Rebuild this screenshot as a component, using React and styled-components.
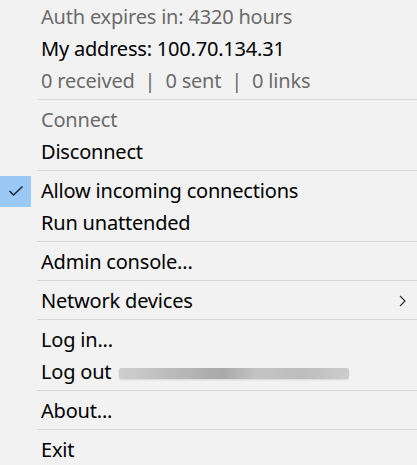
import React from 'react';
import styled, { createGlobalStyle } from 'styled-components';

const GlobalStyle = createGlobalStyle`
  html, body {
    margin: 0;
    background: #f2f2f2;
  }
  body {
    font-family: 'Noto Sans', 'Open Sans', sans-serif;
  }
`;

const Menu = styled.div`
  display: flex;
  flex-flow: column;
  padding-top: 1px;
  width: 417px;
  height: 465px;
  overflow: hidden;
  background: #f2f2f2;
`;

const Item = styled.div`
  display: flex;
  align-items: center;
  height: 32px;
  font-size: 20px;
  line-height: 32px;
  letter-spacing: -0.2px;
  color: ${({ $muted }) => ($muted ? '#6b6b6b' : '#000')};
  white-space: nowrap;
`;

const Gutter = styled.div`
  flex: 0 0 31px;
  height: 31px;
  display: flex;
  align-items: center;
  justify-content: center;
  background: ${({ $checked }) => ($checked ? '#99c9f4' : 'transparent')};
`;

const Label = styled.span`
  margin-left: 10px;
  display: flex;
  align-items: center;
`;

const Pipe = styled.span`
  margin: 0 10px;
`;

const Arrow = styled.span`
  margin-left: auto;
  margin-right: 11px;
  display: flex;
`;

const Separator = styled.div`
  height: 1px;
  margin: 2px 0 4px 37px;
  background: #d7d7d7;
`;

const Redacted = styled.span`
  display: inline-block;
  width: 230px;
  height: 11px;
  margin-left: 8px;
  margin-top: 3px;
  border-radius: 2px;
  background: linear-gradient(90deg, #cfcfcf 0%, #b9b9b9 25%, #a9a9a9 45%, #c4c4c4 60%, #bdbdbd 80%, #cdcdcd 100%);
  box-shadow: 0 1px 2px rgba(0, 0, 0, 0.12);
`;

const Check = () => (
  <svg width='16' height='12' viewBox='0 0 16 12'>
    <path d='M1.5 6 L5.5 10 L14.5 1.5' fill='none' stroke='#1f2a36' strokeWidth='1.6' />
  </svg>
);

const Chevron = () => (
  <svg width='7' height='12' viewBox='0 0 7 12'>
    <path d='M1 1 L6 6 L1 11' fill='none' stroke='#333' strokeWidth='1.2' />
  </svg>
);

const MenuItem = ({ children, muted, checked, submenu }) => (
  <Item $muted={muted}>
    <Gutter $checked={checked}>{checked ? <Check /> : null}</Gutter>
    <Label>{children}</Label>
    {submenu ? (
      <Arrow>
        <Chevron />
      </Arrow>
    ) : null}
  </Item>
);

const App = () => (
  <>
    <GlobalStyle />
    <Menu>
      <MenuItem muted>Auth expires in: 4320 hours</MenuItem>
      <MenuItem>My address: 100.70.134.31</MenuItem>
      <MenuItem muted>
        0 received<Pipe>|</Pipe>0 sent<Pipe>|</Pipe>0 links
      </MenuItem>
      <Separator />
      <MenuItem muted>Connect</MenuItem>
      <MenuItem>Disconnect</MenuItem>
      <Separator />
      <MenuItem checked>Allow incoming connections</MenuItem>
      <MenuItem>Run unattended</MenuItem>
      <Separator />
      <MenuItem>Admin console...</MenuItem>
      <Separator />
      <MenuItem submenu>Network devices</MenuItem>
      <Separator />
      <MenuItem>Log in...</MenuItem>
      <MenuItem>
        Log out <Redacted />
      </MenuItem>
      <Separator />
      <MenuItem>About...</MenuItem>
      <Separator />
      <MenuItem>Exit</MenuItem>
    </Menu>
  </>
);

export default App;
